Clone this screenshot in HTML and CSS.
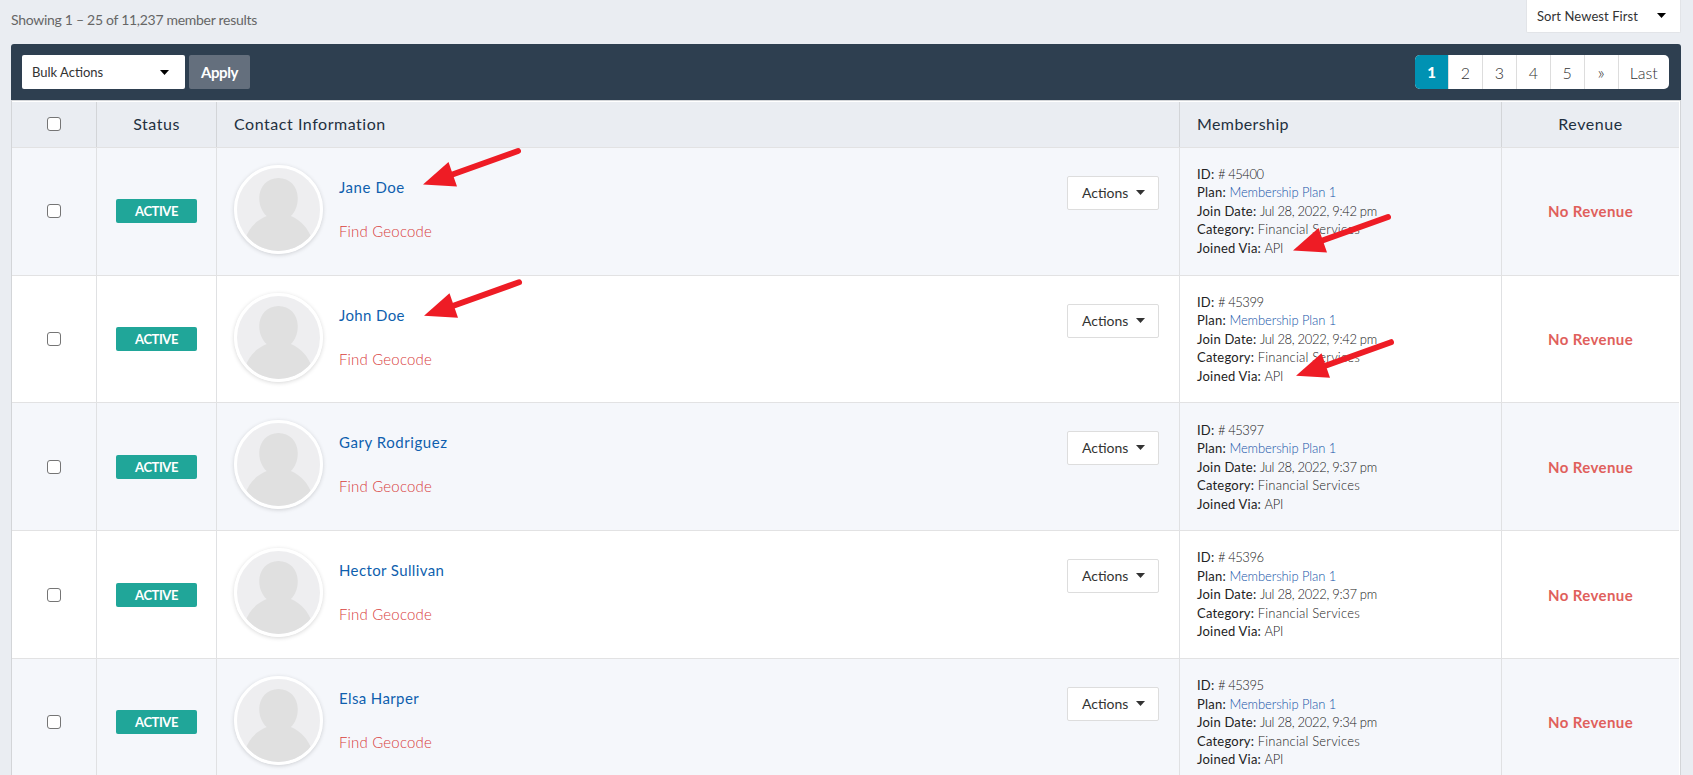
FILE: index.html
```html
<!DOCTYPE html>
<html lang="en">
<head>
<meta charset="utf-8">
<title>Member results</title>
<link rel="stylesheet" href="styles.css">
</head>
<body>
<svg width="0" height="0" class="defs">
  <symbol id="person" viewBox="0 0 84 84">
    <rect width="84" height="84" fill="#eeeef0"/>
    <path d="M42 10c-11 0-19.500 8.500-19.500 20 0 8 3 14.500 7.500 18.500C19 53 12 61 8 72l0 12h68V72C72 61 65 53 54.500 48.500 59 44.500 61.500 38 61.500 30 61.500 18.500 53 10 42 10z" fill="#e0e0e0"/>
  </symbol>
  <symbol id="caret" viewBox="0 0 9 5"><path d="M0 0h9L4.500 5z" fill="currentColor"/></symbol>
</svg>
<header class="top">
  <p class="summary">Showing 1 – 25 of 11,237 member results</p>
  <div class="sort"><span>Sort Newest First</span><svg class="caret"><use href="#caret"/></svg></div>
</header>
<main class="panel">
  <div class="toolbar">
    <div class="bulk"><span>Bulk Actions</span><svg class="caret"><use href="#caret"/></svg></div>
    <button class="apply">Apply</button>
    <nav class="pages"><a class="on">1</a><a>2</a><a>3</a><a>4</a><a>5</a><a class="next">»</a><a class="last">Last</a></nav>
  </div>
  <section class="table">
    <div class="row head">
      <div class="cell center"><i class="check"></i></div>
      <div class="cell center">Status</div>
      <div class="cell pad title-contact">Contact Information</div>
      <div class="cell pad title-member">Membership</div>
      <div class="cell center">Revenue</div>
    </div>
    <div class="row">
      <div class="cell center"><i class="check"></i></div>
      <div class="cell center"><span class="badge">ACTIVE</span></div>
      <div class="cell contact"><svg class="avatar"><use href="#person"/></svg><div class="who"><a class="name">Jane Doe</a><a class="geo">Find Geocode</a></div><button class="actions">Actions<svg class="caret"><use href="#caret"/></svg></button></div>
      <div class="cell pad"><ul class="meta"><li><b>ID:</b> <span class="num">#&nbsp;45400</span></li><li><b>Plan:</b> <a>Membership Plan 1</a></li><li><b>Join Date:</b> <span class="date">Jul 28, 2022, 9:42 pm</span></li><li><b>Category:</b> <span class="cat">Financial Services</span></li><li><b>Joined Via:</b> <span class="via">API</span></li></ul></div>
      <div class="cell center"><span class="revenue">No Revenue</span></div>
    </div>
    <div class="row">
      <div class="cell center"><i class="check"></i></div>
      <div class="cell center"><span class="badge">ACTIVE</span></div>
      <div class="cell contact"><svg class="avatar"><use href="#person"/></svg><div class="who"><a class="name snug">John Doe</a><a class="geo">Find Geocode</a></div><button class="actions">Actions<svg class="caret"><use href="#caret"/></svg></button></div>
      <div class="cell pad"><ul class="meta"><li><b>ID:</b> <span class="num">#&nbsp;45399</span></li><li><b>Plan:</b> <a>Membership Plan 1</a></li><li><b>Join Date:</b> <span class="date">Jul 28, 2022, 9:42 pm</span></li><li><b>Category:</b> <span class="cat">Financial Services</span></li><li><b>Joined Via:</b> <span class="via">API</span></li></ul></div>
      <div class="cell center"><span class="revenue">No Revenue</span></div>
    </div>
    <div class="row">
      <div class="cell center"><i class="check"></i></div>
      <div class="cell center"><span class="badge">ACTIVE</span></div>
      <div class="cell contact"><svg class="avatar"><use href="#person"/></svg><div class="who"><a class="name">Gary Rodriguez</a><a class="geo">Find Geocode</a></div><button class="actions">Actions<svg class="caret"><use href="#caret"/></svg></button></div>
      <div class="cell pad"><ul class="meta"><li><b>ID:</b> <span class="num">#&nbsp;45397</span></li><li><b>Plan:</b> <a>Membership Plan 1</a></li><li><b>Join Date:</b> <span class="date">Jul 28, 2022, 9:37 pm</span></li><li><b>Category:</b> <span class="cat">Financial Services</span></li><li><b>Joined Via:</b> <span class="via">API</span></li></ul></div>
      <div class="cell center"><span class="revenue">No Revenue</span></div>
    </div>
    <div class="row">
      <div class="cell center"><i class="check"></i></div>
      <div class="cell center"><span class="badge">ACTIVE</span></div>
      <div class="cell contact"><svg class="avatar"><use href="#person"/></svg><div class="who"><a class="name snug">Hector Sullivan</a><a class="geo">Find Geocode</a></div><button class="actions">Actions<svg class="caret"><use href="#caret"/></svg></button></div>
      <div class="cell pad"><ul class="meta"><li><b>ID:</b> <span class="num">#&nbsp;45396</span></li><li><b>Plan:</b> <a>Membership Plan 1</a></li><li><b>Join Date:</b> <span class="date">Jul 28, 2022, 9:37 pm</span></li><li><b>Category:</b> <span class="cat">Financial Services</span></li><li><b>Joined Via:</b> <span class="via">API</span></li></ul></div>
      <div class="cell center"><span class="revenue">No Revenue</span></div>
    </div>
    <div class="row">
      <div class="cell center"><i class="check"></i></div>
      <div class="cell center"><span class="badge">ACTIVE</span></div>
      <div class="cell contact"><svg class="avatar"><use href="#person"/></svg><div class="who"><a class="name snug">Elsa Harper</a><a class="geo">Find Geocode</a></div><button class="actions">Actions<svg class="caret"><use href="#caret"/></svg></button></div>
      <div class="cell pad"><ul class="meta"><li><b>ID:</b> <span class="num">#&nbsp;45395</span></li><li><b>Plan:</b> <a>Membership Plan 1</a></li><li><b>Join Date:</b> <span class="date">Jul 28, 2022, 9:34 pm</span></li><li><b>Category:</b> <span class="cat">Financial Services</span></li><li><b>Joined Via:</b> <span class="via">API</span></li></ul></div>
      <div class="cell center"><span class="revenue">No Revenue</span></div>
    </div>
  </section>
</main>
<svg class="arrows" viewBox="0 0 1693 775">
  <symbol id="arrow" viewBox="0 0 100 40" overflow="visible"><path d="M28 27.500L95 3.500" stroke="#ee1c25" stroke-width="6" stroke-linecap="round"/><path d="M0 37L25.500 14.500 34 39z" fill="#ee1c25"/></symbol>
  <use href="#arrow" x="423" y="147.500" width="100" height="40"/>
  <use href="#arrow" x="424" y="278.800" width="100" height="40"/>
  <use href="#arrow" x="1293" y="213.500" width="100" height="40"/>
  <use href="#arrow" x="1296" y="338.700" width="100" height="40"/>
</svg>
</body>
</html>
```
FILE: styles.css
```css
* { box-sizing: border-box; }
html, body { height: 100%; }
body {
  margin: 0;
  padding: 0 12px 0 11px;
  height: 775px;
  overflow: hidden;
  background: #eaedf2;
  font-family: Lato, "Open Sans", sans-serif;
  color: #444;
}
.defs { position: absolute; }
.caret { width: 9px; height: 5px; flex: none; }

.top { height: 44px; display: flex; justify-content: space-between; align-items: flex-start; }
.summary { margin: 0; padding-top: 11px; font-size: 14px; line-height: 18px; letter-spacing: -.29px; color: #666; }
.sort {
  width: 155px; height: 33px; padding: 0 14px 1px 10px;
  display: flex; align-items: center; justify-content: space-between;
  background: #fff; border: 1px solid #e2e4e8; border-top: 0; border-radius: 0 0 2px 2px;
  font-size: 13px; letter-spacing: .08px; color: #333;
}
.sort .caret, .bulk .caret { color: #000; }

.toolbar {
  height: 56px; padding: 0 12px 0 11px;
  display: flex; align-items: center; gap: 4px;
  background: #2e3f50; border-radius: 3px 3px 0 0;
}
.bulk {
  width: 163px; height: 34px; padding: 0 16px 0 10px;
  display: flex; align-items: center; justify-content: space-between;
  background: #fff; border-radius: 2px; font-size: 13px; color: #333;
}
.apply {
  width: 61px; height: 34px; padding: 0 0 1px; border: 0; border-radius: 2px;
  background: #646f7d; color: #fff; font: 700 15px Lato, sans-serif; letter-spacing: -.4px;
}
.pages { margin-left: auto; display: flex; height: 34px; border-radius: 5px; overflow: hidden; background: #fff; }
.pages a {
  width: 33.9px; border-left: 1px solid #ddd;
  display: flex; align-items: center; justify-content: center;
  font-size: 16px; font-weight: 300; color: #333;
}
.pages .on { background: #0092b3; color: #fff; font-weight: 900; font-size: 15px; border: 0; width: 33px; }
.pages .next { font-size: 18px; padding-bottom: 1px; }
.pages .last { width: 51.5px; }

.table { border: 1px solid #d3d5d8; border-bottom: 0; padding: 1px 1px 0 0; background: #fff; }
.row { display: grid; grid-template-columns: 84px 120px 963px 322px 1fr; height: 127.8px; border-bottom: 1px solid #e2e2e3; }
.row:nth-child(even) { background: #f5f7fb; }
.cell { display: flex; align-items: center; border-left: 1px solid #e0e1e3; min-width: 0; }
.cell:first-child { border-left: 0; }
.head { height: 45.8px; background: #eaedf2; font-size: 16px; color: #1f3040; letter-spacing: .54px; }
.head .cell { border-color: #d3d5d8; padding-bottom: 1px; }
.center { justify-content: center; }
.pad { padding-left: 17px; }
.title-member { letter-spacing: .39px; }

.check { width: 14px; height: 14px; border: 1px solid #757575; border-radius: 3px; background: #fff; }
.badge {
  width: 81px; height: 24px; border-radius: 2px; background: #20a699; color: #fff;
  font-size: 13px; font-weight: 700; letter-spacing: -.45px; line-height: 24px; text-align: center;
}
.contact { align-items: flex-start; padding: 17px 20px 0 17px; }
.avatar { width: 89px; height: 89px; border: 3px solid #fff; border-radius: 50%; box-shadow: 0 1px 4px rgba(0,0,0,.17); flex: none; }
.who { margin: 12px 0 0 16px; display: flex; flex-direction: column; gap: 24px; font-size: 15px; line-height: 20px; }
.name { color: #0f5fae; letter-spacing: .56px; }
.snug { letter-spacing: .38px; }
.geo { color: #d8403c; font-weight: 300; letter-spacing: .18px; }
.actions {
  margin: 11px 0 0 auto; width: 92px; height: 34px; padding: 0 13px 1px 14px;
  display: flex; align-items: center; justify-content: space-between;
  background: #fff; border: 1px solid #ddd; border-radius: 2px;
  font: 400 14px Lato, sans-serif; color: #333;
}
.meta { margin: 0; padding: 0; list-style: none; font-size: 13px; line-height: 18.5px; font-weight: 300; color: #222; }
.meta b { font-weight: 400; letter-spacing: .22px; color: #222; }
.meta a { color: #1553a8; letter-spacing: -.1px; }
.num { letter-spacing: -.45px; }
.date { letter-spacing: -.32px; }
.cat { letter-spacing: .2px; }
.via { letter-spacing: -.3px; }
.revenue { color: #e0605c; font-size: 15px; font-weight: 700; letter-spacing: .4px; }

.arrows { position: absolute; left: 0; top: 0; width: 1693px; height: 775px; pointer-events: none; }
```
